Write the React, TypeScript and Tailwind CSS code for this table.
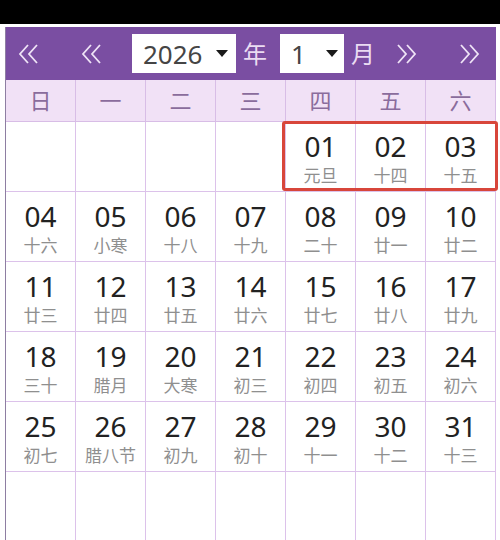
import React from "react"

const weekDays = ["日", "一", "二", "三", "四", "五", "六"]

type Day = { d: string; l: string } | null

const rows: Day[][] = [
    [null, null, null, null, { d: "01", l: "元旦" }, { d: "02", l: "十四" }, { d: "03", l: "十五" }],
    [
        { d: "04", l: "十六" }, { d: "05", l: "小寒" }, { d: "06", l: "十八" }, { d: "07", l: "十九" },
        { d: "08", l: "二十" }, { d: "09", l: "廿一" }, { d: "10", l: "廿二" },
    ],
    [
        { d: "11", l: "廿三" }, { d: "12", l: "廿四" }, { d: "13", l: "廿五" }, { d: "14", l: "廿六" },
        { d: "15", l: "廿七" }, { d: "16", l: "廿八" }, { d: "17", l: "廿九" },
    ],
    [
        { d: "18", l: "三十" }, { d: "19", l: "腊月" }, { d: "20", l: "大寒" }, { d: "21", l: "初三" },
        { d: "22", l: "初四" }, { d: "23", l: "初五" }, { d: "24", l: "初六" },
    ],
    [
        { d: "25", l: "初七" }, { d: "26", l: "腊八节" }, { d: "27", l: "初九" }, { d: "28", l: "初十" },
        { d: "29", l: "十一" }, { d: "30", l: "十二" }, { d: "31", l: "十三" },
    ],
    [null, null, null, null, null, null, null],
]

function Chevrons({ dir }: { dir: "left" | "right" }) {
    const d = dir === "left"
        ? "M11 2 L3 11 L11 20 M20 2 L12 11 L20 20"
        : "M3 2 L11 11 L3 20 M12 2 L20 11 L12 20"
    return (
        <svg width="23" height="22" viewBox="0 0 23 22" fill="none">
            <path d={d} stroke="#efe4f6" strokeWidth="1.8" strokeLinejoin="miter" />
        </svg>
    )
}

function Caret() {
    return (
        <svg width="12" height="7" viewBox="0 0 12 7">
            <path d="M0 0 H12 L6 7 Z" fill="#1a1a1a" />
        </svg>
    )
}

export default function App() {
    return (
        <div
            className="w-[500px] h-[540px] bg-white overflow-hidden"
            style={{ fontFamily: '"Noto Sans", "Noto Sans CJK SC", sans-serif' }}
        >
            <div className="h-[24px] bg-black" />
            <div className="h-[3px] bg-white" />

            <div className="ml-[5px] w-[491px] border-l border-[#8e7ea2]">
                {/* header */}
                <div className="h-[53px] bg-[#7a4ea2] flex items-center">
                    <div className="ml-[11px]"><Chevrons dir="left" /></div>
                    <div className="ml-[40px]"><Chevrons dir="left" /></div>
                    <div className="ml-[29px] w-[104px] h-[39px] bg-white flex items-center justify-between pl-[11px] pr-[8px]">
                        <span className="text-[26px] leading-none text-[#454545]">2026</span>
                        <Caret />
                    </div>
                    <span className="ml-[7px] text-[24px] leading-none text-[#eadcf2]">年</span>
                    <div className="ml-[13px] w-[64px] h-[39px] bg-white flex items-center justify-between pl-[11px] pr-[6px]">
                        <span className="text-[26px] leading-none text-[#454545]">1</span>
                        <Caret />
                    </div>
                    <span className="ml-[7px] text-[24px] leading-none text-[#eadcf2]">月</span>
                    <div className="ml-[20px]"><Chevrons dir="right" /></div>
                    <div className="ml-[40px]"><Chevrons dir="right" /></div>
                </div>

                {/* week day names */}
                <div className="grid grid-cols-7 h-[42px] bg-[#f1e1f6] border-b border-[#d8bde6]">
                    {weekDays.map((w) => (
                        <div
                            key={w}
                            className="flex items-center justify-center border-r border-[#d8bde6] text-[22px] text-[#8a6c9c]"
                        >
                            {w}
                        </div>
                    ))}
                </div>

                {/* days */}
                <div className="relative">
                    {rows.map((row, i) => (
                        <div key={i} className="grid grid-cols-7 h-[70px]">
                            {row.map((c, j) => (
                                <div
                                    key={j}
                                    className="flex flex-col items-center border-r border-b border-[#dcc2ea] pt-[7px]"
                                >
                                    {c && (
                                        <>
                                            <span className="text-[28px] leading-[35px] text-[#222]">{c.d}</span>
                                            <span className="text-[17px] leading-[23px] text-[#8f8f8f]">{c.l}</span>
                                        </>
                                    )}
                                </div>
                            ))}
                        </div>
                    ))}
                    <div className="absolute left-[276px] top-[-1px] w-[216px] h-[70px] border-[3px] border-[#d8463b] rounded-[3px]" />
                </div>
            </div>
        </div>
    )
}
